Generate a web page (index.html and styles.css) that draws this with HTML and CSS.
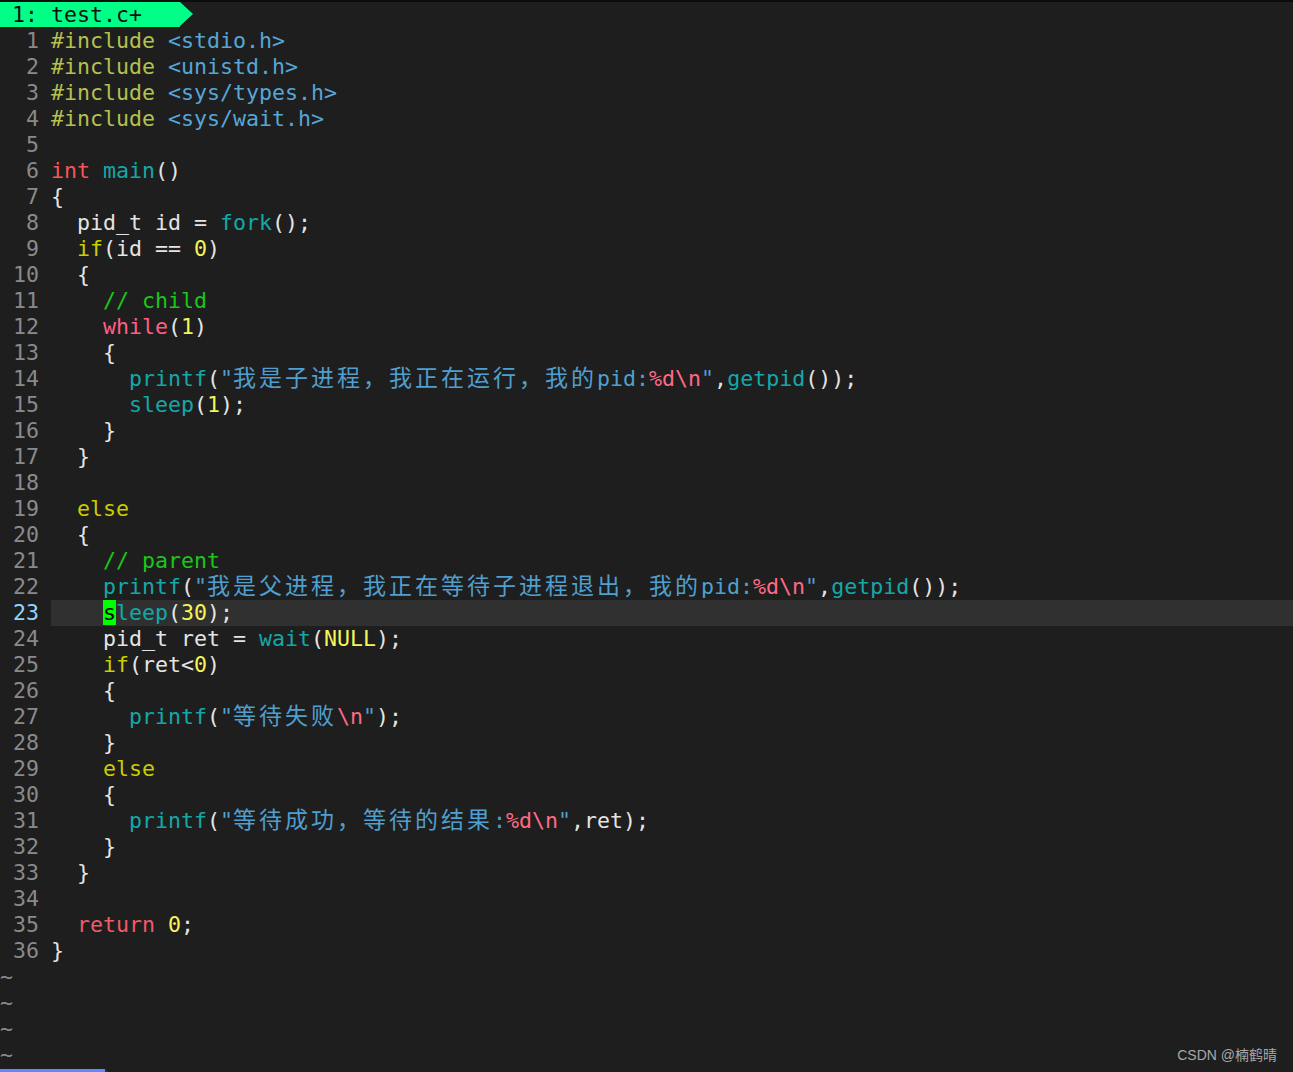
FILE: index.html
```html
<!DOCTYPE html>
<html lang="en">
<head>
    <meta charset="UTF-8">
    <meta name="viewport" content="width=device-width, initial-scale=1.0">
    <title>test.c - vim</title>
    <link rel="stylesheet" href="styles.css">
</head>
<body>
    <div class="screen">
        <div class="tabline">
            <span class="tab">1: test.c+</span>
        </div>
        <div class="buffer">
            <div class="ln"><span class="nr">  1 </span><span class="code"><span class="pp">#include</span> <span class="inc">&lt;stdio.h&gt;</span></span></div>
            <div class="ln"><span class="nr">  2 </span><span class="code"><span class="pp">#include</span> <span class="inc">&lt;unistd.h&gt;</span></span></div>
            <div class="ln"><span class="nr">  3 </span><span class="code"><span class="pp">#include</span> <span class="inc">&lt;sys/types.h&gt;</span></span></div>
            <div class="ln"><span class="nr">  4 </span><span class="code"><span class="pp">#include</span> <span class="inc">&lt;sys/wait.h&gt;</span></span></div>
            <div class="ln"><span class="nr">  5 </span><span class="code"></span></div>
            <div class="ln"><span class="nr">  6 </span><span class="code"><span class="ty">int</span> <span class="fn">main</span>()</span></div>
            <div class="ln"><span class="nr">  7 </span><span class="code">{</span></div>
            <div class="ln"><span class="nr">  8 </span><span class="code">  pid_t id = <span class="fn">fork</span>();</span></div>
            <div class="ln"><span class="nr">  9 </span><span class="code">  <span class="cond">if</span>(id == <span class="num">0</span>)</span></div>
            <div class="ln"><span class="nr"> 10 </span><span class="code">  {</span></div>
            <div class="ln"><span class="nr"> 11 </span><span class="code">    <span class="cm">// child</span></span></div>
            <div class="ln"><span class="nr"> 12 </span><span class="code">    <span class="kw">while</span>(<span class="num">1</span>)</span></div>
            <div class="ln"><span class="nr"> 13 </span><span class="code">    {</span></div>
            <div class="ln"><span class="nr"> 14 </span><span class="code">      <span class="fn">printf</span>(<span class="str">"<span class="cjk">我是子进程，我正在运行，我的</span>pid:<span class="sp">%d\n</span>"</span>,<span class="fn">getpid</span>());</span></div>
            <div class="ln"><span class="nr"> 15 </span><span class="code">      <span class="fn">sleep</span>(<span class="num">1</span>);</span></div>
            <div class="ln"><span class="nr"> 16 </span><span class="code">    }</span></div>
            <div class="ln"><span class="nr"> 17 </span><span class="code">  }</span></div>
            <div class="ln"><span class="nr"> 18 </span><span class="code"></span></div>
            <div class="ln"><span class="nr"> 19 </span><span class="code">  <span class="cond">else</span></span></div>
            <div class="ln"><span class="nr"> 20 </span><span class="code">  {</span></div>
            <div class="ln"><span class="nr"> 21 </span><span class="code">    <span class="cm">// parent</span></span></div>
            <div class="ln"><span class="nr"> 22 </span><span class="code">    <span class="fn">printf</span>(<span class="str">"<span class="cjk">我是父进程，我正在等待子进程退出，我的</span>pid:<span class="sp">%d\n</span>"</span>,<span class="fn">getpid</span>());</span></div>
            <div class="ln cur"><span class="nr"> 23 </span><span class="code">    <span class="fn"><span class="cursor">s</span>leep</span>(<span class="num">30</span>);</span></div>
            <div class="ln"><span class="nr"> 24 </span><span class="code">    pid_t ret = <span class="fn">wait</span>(<span class="num">NULL</span>);</span></div>
            <div class="ln"><span class="nr"> 25 </span><span class="code">    <span class="cond">if</span>(ret&lt;<span class="num">0</span>)</span></div>
            <div class="ln"><span class="nr"> 26 </span><span class="code">    {</span></div>
            <div class="ln"><span class="nr"> 27 </span><span class="code">      <span class="fn">printf</span>(<span class="str">"<span class="cjk">等待失败</span><span class="sp">\n</span>"</span>);</span></div>
            <div class="ln"><span class="nr"> 28 </span><span class="code">    }</span></div>
            <div class="ln"><span class="nr"> 29 </span><span class="code">    <span class="cond">else</span></span></div>
            <div class="ln"><span class="nr"> 30 </span><span class="code">    {</span></div>
            <div class="ln"><span class="nr"> 31 </span><span class="code">      <span class="fn">printf</span>(<span class="str">"<span class="cjk">等待成功，等待的结果</span>:<span class="sp">%d\n</span>"</span>,ret);</span></div>
            <div class="ln"><span class="nr"> 32 </span><span class="code">    }</span></div>
            <div class="ln"><span class="nr"> 33 </span><span class="code">  }</span></div>
            <div class="ln"><span class="nr"> 34 </span><span class="code"></span></div>
            <div class="ln"><span class="nr"> 35 </span><span class="code">  <span class="ret">return</span> <span class="num">0</span>;</span></div>
            <div class="ln"><span class="nr"> 36 </span><span class="code">}</span></div>
            <div class="ln tilde">~</div>
            <div class="ln tilde">~</div>
            <div class="ln tilde">~</div>
            <div class="ln tilde">~</div>
        </div>
        <div class="statusline">
            <span class="mode"></span>
            <span class="mark"></span>
            <span class="mark second"></span>
        </div>
    </div>
    <div class="watermark">CSDN @楠鹤晴</div>
</body>
</html>
```
FILE: styles.css
```css
body {
    margin: 0;
    background: #1e1e1e;
    color: #e4e4e4;
    font-family: "DejaVu Sans Mono", "Noto Sans CJK SC", monospace;
    font-size: 21.6px;
    height: 1072px;
    overflow: hidden;
}
.screen {
    border-top: 2px solid #0c0c0c;
}
.tabline {
    height: 25px;
    margin-bottom: 1px;
    display: flex;
}
.tab {
    position: relative;
    width: 168px;
    padding-left: 12px;
    background: #00ff87;
    color: #101010;
    line-height: 25px;
    white-space: pre;
}
.tab::after {
    content: "";
    position: absolute;
    left: 100%;
    top: 0;
    border-left: 13px solid #00ff87;
    border-top: 12.5px solid transparent;
    border-bottom: 12.5px solid transparent;
}
.ln {
    display: flex;
    height: 26px;
    line-height: 26px;
    white-space: pre;
}
.nr {
    width: 51px;
    flex: none;
    color: #8a8a8a;
}
.code {
    flex: 1;
}
.cur .nr { color: #8fd7ff; }
.cur .code { background: #303030; }
.cursor {
    background: #00ff00;
    color: #000;
}
.tilde { color: #8a8a8a; }

.pp { color: #b4c14f; }
.inc { color: #56a6d8; }
.ty { color: #f55656; }
.ret { color: #f45a66; }
.kw { color: #ff5f87; }
.cond { color: #cccc00; }
.fn { color: #13a8a8; }
.num { color: #f5f55a; }
.cm { color: #18c818; }
.str { color: #4f9fd0; }
.sp { color: #ff6a85; }
.cjk {
    font-family: "Noto Sans CJK SC", sans-serif;
    font-size: 23px;
    line-height: 16px;
    letter-spacing: 3px;
}

.statusline {
    display: flex;
    height: 26px;
    margin-top: 1px;
}
.mode {
    position: relative;
    width: 105px;
    background: #5f87ff;
}
.mode::after {
    content: "";
    position: absolute;
    left: 100%;
    top: 0;
    border-left: 13px solid #303030;
    border-top: 13px solid transparent;
    border-bottom: 13px solid transparent;
}
.mark {
    width: 10px;
    height: 3px;
    margin-top: 3px;
    margin-left: 120px;
    background: #d0105a;
}
.mark.second {
    width: 8px;
    margin-left: 15px;
}
.watermark {
    position: absolute;
    right: 16px;
    top: 1044px;
    font-family: "Liberation Sans", "Noto Sans CJK SC", sans-serif;
    font-size: 14px;
    color: #a8a8a8;
}
```
